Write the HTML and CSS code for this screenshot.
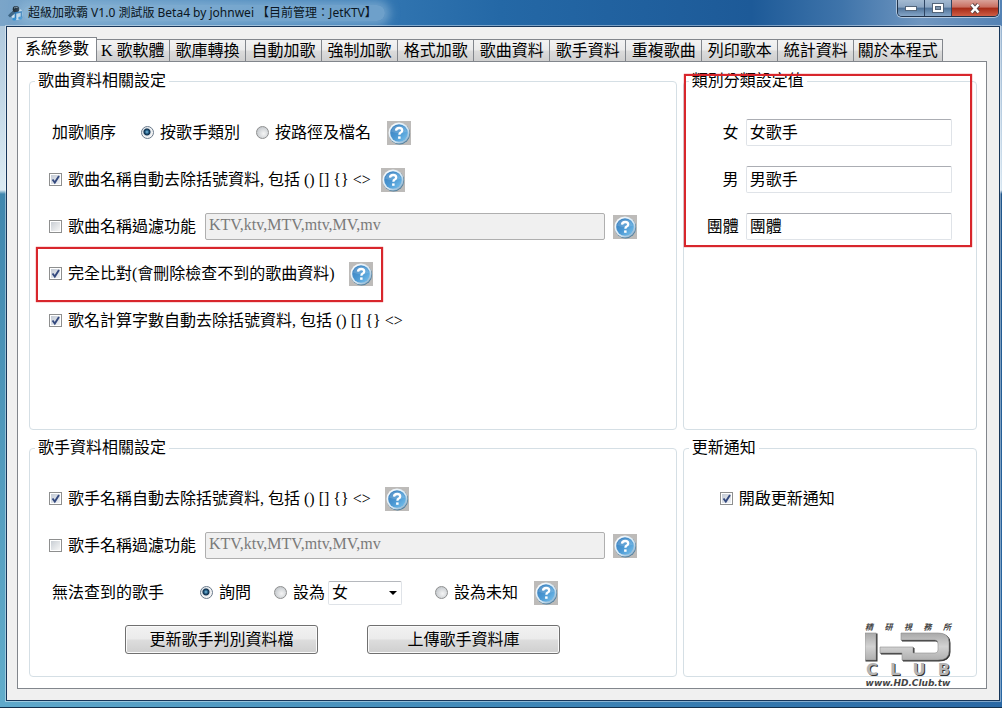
FILE: index.html
```html
<!DOCTYPE html>
<html lang="zh-Hant">
<head>
    <meta charset="UTF-8">
    <meta name="viewport" content="width=device-width, initial-scale=1.0">
    <title>超級加歌霸 V1.0</title>
    <link rel="stylesheet" href="styles.css">
</head>
<body>
    <!-- shared icons -->
    <svg class="defs" width="0" height="0" aria-hidden="true">
        <defs>
            <linearGradient id="ball" x1="0" y1="0" x2="1" y2="1">
                <stop offset="0" stop-color="#3a7dbb"/>
                <stop offset="0.5" stop-color="#4a97d2"/>
                <stop offset="1" stop-color="#7cc4ee"/>
            </linearGradient>
            <linearGradient id="ring" x1="0" y1="0" x2="1" y2="1">
                <stop offset="0" stop-color="#ffffff"/>
                <stop offset="0.6" stop-color="#d5e6f2"/>
                <stop offset="1" stop-color="#6f9fc4"/>
            </linearGradient>
            <linearGradient id="metal" x1="0" y1="0" x2="0" y2="1">
                <stop offset="0" stop-color="#a9a9a9"/>
                <stop offset="0.5" stop-color="#d2d2d2"/>
                <stop offset="1" stop-color="#b0b0b0"/>
            </linearGradient>
        </defs>
        <symbol id="help" viewBox="0 0 24 24">
            <rect width="24" height="24" fill="#bdbbb9"/>
            <circle cx="12.5" cy="12.8" r="10.6" fill="#56829f"/>
            <circle cx="12" cy="12" r="10.5" fill="url(#ring)"/>
            <circle cx="12" cy="12" r="8.8" fill="url(#ball)"/>
            <path d="M4 10.5a8.3 8.3 0 0 1 16 0q-8 3.500-16 0z" fill="#fff" opacity=".14"/>
            <path d="M9 9.600q.2-2.600 3.200-2.600 3 0 3 2.400 0 1.300-1.500 2.200-1.300.8-1.300 2.100" fill="none" stroke="#fff" stroke-width="2.300"/>
            <rect x="11.100" y="15.400" width="2.500" height="2.400" fill="#fff"/>
        </symbol>
    </svg>

    <div class="window">
        <header class="titlebar">
            <svg class="app-icon" viewBox="0 0 16 16" aria-hidden="true">
                <circle cx="10" cy="9" r="6" fill="#cfe4f2"/>
                <path d="M1 10.500 7 4l3.500 2.500-7.500 6z" fill="#3c6484"/>
                <circle cx="9" cy="4.200" r="3.300" fill="#18242e"/>
                <path d="M7 3.200q1.500-1.700 3.500-.7" stroke="#8aa3b5" fill="none"/>
                <path d="M8.500 14V8l6-1v6" stroke="#2272b4" stroke-width="1.600" fill="none"/>
                <ellipse cx="7.300" cy="14" rx="2" ry="1.600" fill="#2f8fd4"/>
                <ellipse cx="13.200" cy="13" rx="2" ry="1.600" fill="#2f8fd4"/>
            </svg>
            <span class="caption">超級加歌霸 V1.0 測試版 Beta4 by johnwei 【目前管理：JetKTV】</span>
            <div class="controls">
                <button class="ctl" aria-label="最小化">
                    <svg width="12" height="6" viewBox="0 0 12 6"><rect x=".5" y="1.500" width="11" height="4" fill="#fff" stroke="#53657a"/></svg>
                </button>
                <button class="ctl" aria-label="最大化">
                    <svg width="12" height="10" viewBox="0 0 12 10"><rect x=".5" y=".5" width="11" height="9" fill="#fff" stroke="#53657a"/><rect x="3.500" y="3.500" width="5" height="3" fill="#7f96ae" stroke="#53657a"/></svg>
                </button>
                <button class="ctl close" aria-label="關閉">
                    <svg width="12" height="11" viewBox="0 0 12 11"><path d="M2.500 1.500l7 8M9.500 1.500l-7 8" stroke="#5a4444" stroke-width="4.200"/><path d="M2.500 1.500l7 8M9.500 1.500l-7 8" stroke="#fff" stroke-width="2.600"/></svg>
                </button>
            </div>
        </header>

        <main class="client">
            <nav class="tabs">
                <button class="tab active">系統參數</button>
                <button class="tab tight">K 歌軟體</button>
                <button class="tab">歌庫轉換</button>
                <button class="tab">自動加歌</button>
                <button class="tab">強制加歌</button>
                <button class="tab">格式加歌</button>
                <button class="tab">歌曲資料</button>
                <button class="tab">歌手資料</button>
                <button class="tab">重複歌曲</button>
                <button class="tab">列印歌本</button>
                <button class="tab">統計資料</button>
                <button class="tab tight">關於本程式</button>
            </nav>

            <form class="panel">
                <fieldset class="group song">
                    <legend>歌曲資料相關設定</legend>
                    <div class="row indent">
                        <span class="order">加歌順序</span>
                        <label class="choice"><input type="radio" name="order" checked>按歌手類別</label>
                        <label class="choice"><input type="radio" name="order">按路徑及檔名</label>
                        <button type="button" class="help" aria-label="說明"><svg><use href="#help"/></svg></button>
                    </div>
                    <div class="row">
                        <label class="check"><input type="checkbox" checked>歌曲名稱自動去除括號資料, 包括 () [] {} &lt;&gt;</label>
                        <button type="button" class="help" aria-label="說明"><svg><use href="#help"/></svg></button>
                    </div>
                    <div class="row filter">
                        <label class="check"><input type="checkbox">歌曲名稱過濾功能</label>
                        <input class="text" type="text" value="KTV,ktv,MTV,mtv,MV,mv" aria-label="歌曲名稱過濾" disabled>
                        <button type="button" class="help" aria-label="說明"><svg><use href="#help"/></svg></button>
                    </div>
                    <div class="row">
                        <div class="marked">
                            <label class="check"><input type="checkbox" checked>完全比對(會刪除檢查不到的歌曲資料)</label>
                            <button type="button" class="help" aria-label="說明"><svg><use href="#help"/></svg></button>
                        </div>
                    </div>
                    <div class="row">
                        <label class="check"><input type="checkbox" checked>歌名計算字數自動去除括號資料, 包括 () [] {} &lt;&gt;</label>
                    </div>
                </fieldset>

                <div class="category">
                    <fieldset class="group">
                        <legend>類別分類設定值</legend>
                        <div class="row field">
                            <label for="female">女</label>
                            <input class="text" type="text" id="female" value="女歌手">
                        </div>
                        <div class="row field">
                            <label for="male">男</label>
                            <input class="text" type="text" id="male" value="男歌手">
                        </div>
                        <div class="row field">
                            <label for="band">團體</label>
                            <input class="text" type="text" id="band" value="團體">
                        </div>
                    </fieldset>
                </div>

                <fieldset class="group singer">
                    <legend>歌手資料相關設定</legend>
                    <div class="row">
                        <label class="check"><input type="checkbox" checked>歌手名稱自動去除括號資料, 包括 () [] {} &lt;&gt;</label>
                        <button type="button" class="help" aria-label="說明"><svg><use href="#help"/></svg></button>
                    </div>
                    <div class="row filter">
                        <label class="check"><input type="checkbox">歌手名稱過濾功能</label>
                        <input class="text" type="text" value="KTV,ktv,MTV,mtv,MV,mv" aria-label="歌手名稱過濾" disabled>
                        <button type="button" class="help" aria-label="說明"><svg><use href="#help"/></svg></button>
                    </div>
                    <div class="row indent">
                        <span class="missing">無法查到的歌手</span>
                        <label class="choice ask"><input type="radio" name="missing" checked>詢問</label>
                        <label class="choice set"><input type="radio" name="missing">設為</label>
                        <select aria-label="設為類別">
                            <option>女</option>
                            <option>男</option>
                            <option>團體</option>
                        </select>
                        <label class="choice"><input type="radio" name="missing">設為未知</label>
                        <button type="button" class="help" aria-label="說明"><svg><use href="#help"/></svg></button>
                    </div>
                    <div class="row actions">
                        <button type="button" class="btn">更新歌手判別資料檔</button>
                        <button type="button" class="btn">上傳歌手資料庫</button>
                    </div>
                </fieldset>

                <fieldset class="group update">
                    <legend>更新通知</legend>
                    <div class="row notify">
                        <label class="check"><input type="checkbox" checked>開啟更新通知</label>
                    </div>
                </fieldset>

                <div class="logo">
                    <div class="logo-top"><span>精</span><span>研</span><span>視</span><span>務</span><span>所</span></div>
                    <svg class="logo-mark" viewBox="0 0 86 30" aria-hidden="true">
                        <g fill="#333" stroke="#333" transform="translate(1 1)">
                            <rect x="0" y="1" width="11" height="27"/>
                            <path d="M36 1h37q11 0 11 9v9q0 9-11 9H37v-7H15v-6h33v6h22q3 0 3-3V12q0-4-3-4H36z"/>
                        </g>
                        <g fill="url(#metal)" stroke="#8f8f8f" stroke-width=".6">
                            <rect x="0" y="1" width="11" height="27"/>
                            <path d="M36 1h37q11 0 11 9v9q0 9-11 9H37v-7H15v-6h33v6h22q3 0 3-3V12q0-4-3-4H36z"/>
                        </g>
                    </svg>
                    <div class="logo-club"><span>C</span><span>L</span><span>U</span><span>B</span></div>
                    <div class="logo-url">www.HD.Club.tw</div>
                </div>
            </form>
        </main>
    </div>
</body>
</html>
```
FILE: styles.css
```css
:root {
    --line: #d5dfe5;
    --edge: #82868c;
    --mark: #d8262c;
}

* {
    box-sizing: border-box;
}

body {
    margin: 0;
    font-family: "Liberation Serif", "Noto Sans CJK TC", serif;
    font-size: 16px;
    line-height: 24px;
    color: #000;
}

button,
input,
select {
    font: inherit;
    color: inherit;
    margin: 0;
}

.defs {
    position: absolute;
}

/* window frame */
.window {
    display: flex;
    flex-direction: column;
    min-height: 100vh;
    padding: 0 2px 6px 6px;
    background:
        linear-gradient(90deg, #5fa9cb, #3f88b8 50%, #2a68a4) bottom / 100% 7px no-repeat,
        linear-gradient(#a9c4da, #dcebf3 190px, #4087ae 194px, #62adcb) left / 6px 100% no-repeat,
        linear-gradient(#8fadcc, #d5e5f1 190px, #1f568c 194px, #2a68a4) right / 2px 100% no-repeat;
    border-bottom: 1px solid #12304d;
}

.titlebar {
    display: flex;
    align-items: center;
    height: 26px;
    margin: 0 -2px 0 -6px;
    padding-left: 7px;
    background: linear-gradient(90deg, #7ba5c9, #6c9fc8 5%, #3579b4 35%, #2468a6 50%, #1d5a98 75%, #3f74aa 84%, #6f96c0 92%, #5482b4);
}

.app-icon {
    width: 16px;
    height: 16px;
}

.caption {
    padding: 0 8px 0 5px;
    font-family: "Noto Sans", "Noto Sans CJK TC", sans-serif;
    font-size: 12px;
    line-height: 16px;
    white-space: nowrap;
    color: #0b1622;
    border-radius: 8px;
    background: rgba(150, 188, 218, .6);
    box-shadow: 0 0 10px 5px rgba(150, 188, 218, .6);
}

.controls {
    display: flex;
    align-self: flex-start;
    margin: 0 3px 0 auto;
    height: 17px;
    border: 1px solid #20324a;
    border-top: 0;
    border-radius: 0 0 5px 5px;
    box-shadow: 0 0 0 1px rgba(255, 255, 255, .5);
    overflow: hidden;
}

.ctl {
    display: flex;
    align-items: center;
    justify-content: center;
    width: 27px;
    padding: 0;
    border: 0;
    border-right: 1px solid #2f4563;
    background: linear-gradient(#a3bad2, #8ba5c2 45%, #4f7299 50%, #86a6c8);
}

.ctl.close {
    width: 46px;
    border-right: 0;
    background: linear-gradient(#d9a29a, #c96e60 45%, #a52a17 50%, #cf5d45);
}

.client {
    flex: 1;
    display: flex;
    flex-direction: column;
    padding: 10px 12px 11px 10px;
    border: 1px solid #17365a;
    box-shadow: 0 0 0 1px rgba(255, 255, 255, .4);
    background: #f0f0f0;
}

/* tabs */
.tabs {
    display: flex;
    align-items: flex-end;
}

.tab {
    height: 22px;
    padding: 0 5px 0 6px;
    line-height: 22px;
    white-space: nowrap;
    border: 1px solid var(--edge);
    border-left-width: 0;
    border-bottom: 0;
    background: linear-gradient(#f3f3f3, #ebebeb 48%, #dcdcdc 52%, #cfcfcf);
}

.tab.tight {
    padding: 0 4px;
}

.tab.active {
    position: relative;
    height: 25px;
    margin-bottom: -1px;
    padding: 0 7px 2px 7px;
    border-left-width: 1px;
    background: #fff;
}

.panel {
    position: relative;
    flex: 1;
    display: grid;
    grid-template-columns: minmax(0, 11fr) minmax(0, 5fr);
    grid-template-rows: auto 1fr;
    gap: 6px;
    padding: 7px 9px 11px 11px;
    border: 1px solid var(--edge);
    background: #fff;
}

/* groups */
.group {
    min-width: 0;
    height: 100%;
    margin: 0;
    padding: 16px 0 85px;
    border: 1px solid var(--line);
    border-radius: 4px;
}

.group.singer,
.group.update {
    padding: 15px 0 0;
}

.group legend {
    margin-left: 5px;
    padding: 0 3px;
    line-height: 24px;
}

.row {
    display: flex;
    align-items: center;
    height: 47px;
    padding-left: 19px;
    white-space: nowrap;
}

.row.indent {
    padding-left: 22px;
}

.order {
    margin-right: 25px;
}

.missing {
    margin-right: 36px;
}

.check,
.choice {
    display: flex;
    align-items: center;
    gap: 6px;
}

.choice {
    margin-right: 16px;
}

.choice.ask {
    margin-right: 23px;
}

.choice.set {
    margin-right: 3px;
}

input[type="checkbox"],
input[type="radio"] {
    appearance: none;
    width: 13px;
    height: 13px;
    border: 1px solid #8e8f8f;
    background: #fff linear-gradient(135deg, #c9ced4, #f6f6f6) center / 9px 9px no-repeat;
}

input[type="checkbox"]:checked {
    background:
        url('data:image/svg+xml,<svg xmlns="http://www.w3.org/2000/svg" viewBox="0 0 11 11"><path d="M2.500 5.500 4.800 8.500 9 2" fill="none" stroke="%2334497e" stroke-width="1.900"/></svg>') center / 11px 11px no-repeat,
        #fff linear-gradient(135deg, #c3cad4, #f1f3f6) center / 9px 9px no-repeat;
}

input[type="radio"] {
    border-radius: 50%;
    background: radial-gradient(circle at 60% 60%, #f5f5f5, #c8ccd0 70%);
}

input[type="radio"]:checked {
    border-color: #68788a;
    background: radial-gradient(circle at 45% 45%, #7fc3e8 0, #1c5277 2px, #12304d 3px, #dfe6ec 4px, #f5f5f5 5px);
}

.help {
    flex: none;
    width: 24px;
    height: 24px;
    margin-left: 14px;
    padding: 0;
    border: 0;
    background: none;
}

.choice + .help {
    margin-left: 0;
}

.song .row > .check + .help {
    margin-left: 10px;
}

.help svg {
    display: block;
    width: 24px;
    height: 24px;
}

.text {
    height: 27px;
    min-width: 0;
    padding: 0 3px 3px;
    border: 1px solid #dfe3e8;
    border-top-color: #abadb3;
    border-radius: 2px;
    background: #fff;
}

.text:disabled {
    border-color: #afafaf;
    background: #f0f0f0;
    color: #7a7a7a;
}

.filter {
    padding-right: 39px;
}

.filter .text {
    flex: 1;
    margin-left: 9px;
}

.filter .help {
    margin-left: 8px;
}

select {
    appearance: none;
    width: 74px;
    height: 24px;
    margin-right: 33px;
    padding: 0 3px;
    line-height: 20px;
    border: 1px solid #dfe3e8;
    border-top-color: #b5b8bd;
    border-radius: 2px;
    background: url('data:image/svg+xml,<svg xmlns="http://www.w3.org/2000/svg" viewBox="0 0 8 4"><path d="M0 0h8L4 4z"/></svg>') right 4px center / 8px 4px no-repeat #fff;
}

.actions {
    gap: 49px;
    padding-left: 95px;
}

.btn {
    width: 193px;
    height: 29px;
    padding: 0;
    border: 1px solid #707070;
    border-radius: 3px;
    box-shadow: inset 0 0 0 1px #fafafa;
    background: linear-gradient(#f2f2f2, #ebebeb 49%, #dddddd 51%, #cfcfcf);
}

.field {
    gap: 7px;
    padding: 0 24px 0 23px;
}

.field label {
    width: 32px;
    text-align: right;
}

.field .text {
    flex: 1;
}

.notify {
    padding-left: 36px;
}

/* red frames drawn over the form */
.marked {
    position: relative;
    display: flex;
    align-items: center;
    height: 47px;
}

.category {
    position: relative;
}

.marked::after,
.category::after {
    content: "";
    position: absolute;
    border: 2px solid var(--mark);
    box-shadow: 0 0 1px var(--mark);
    pointer-events: none;
}

.marked::after {
    inset: -3px -10px -5px -13px;
}

.category::after {
    inset: 5px 5px auto 1px;
    height: 169px;
}

/* watermark */
.logo {
    position: absolute;
    right: 35px;
    bottom: 0;
    width: 86px;
    font-family: "DejaVu Sans", "Noto Sans CJK TC", sans-serif;
    font-weight: bold;
    font-style: italic;
    color: #444;
}

.logo-top,
.logo-club {
    display: flex;
    justify-content: space-between;
}

.logo-top {
    font-size: 8px;
    line-height: 8px;
}

.logo-mark {
    display: block;
    width: 86px;
    height: 30px;
}

.logo-club {
    padding: 0 1px;
    font-size: 16px;
    line-height: 16px;
    font-style: normal;
    color: #b4b4b4;
    text-shadow: 1px 1px 0 #333;
}

.logo-url {
    font-size: 9px;
    line-height: 10px;
    text-align: center;
    white-space: nowrap;
}
```
